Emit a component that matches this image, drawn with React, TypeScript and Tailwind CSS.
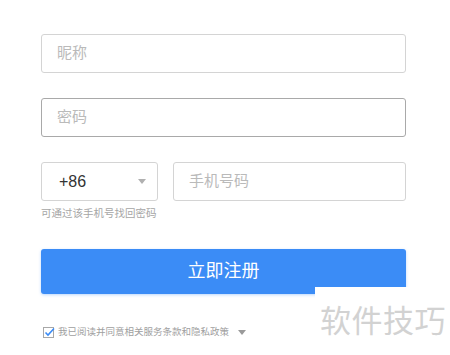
import React from 'react';

const font = { fontFamily: '"Liberation Sans", "Noto Sans CJK SC", sans-serif' };

export default function App() {
  return (
    <div
      className="relative w-[450px] h-[355px] overflow-hidden bg-white"
      style={font}
    >
      <div className="pl-[41px] pt-[34px] w-[406px] flex flex-col">
        {/* Nickname */}
        <div className="h-[39px] border border-[#d4d4d4] rounded-[3px] flex items-center pl-[15px]">
          <span className="text-[15px] text-[#bababa]">昵称</span>
        </div>

        {/* Password */}
        <div className="mt-[25px] h-[39px] border border-[#a9a9a9] rounded-[3px] flex items-center pl-[15px]">
          <span className="text-[15px] text-[#bababa]">密码</span>
        </div>

        {/* Phone row */}
        <div className="mt-[25px] flex gap-[15px]">
          <div className="w-[117px] h-[39px] border border-[#d4d4d4] rounded-[3px] flex items-center justify-between pl-[17px] pr-[11px]">
            <span className="text-[16px] text-[#333]">+86</span>
            <span className="w-0 h-0 border-l-[4px] border-r-[4px] border-t-[5px] border-l-transparent border-r-transparent border-t-[#b0b0b0]" />
          </div>
          <div className="flex-1 h-[39px] border border-[#d4d4d4] rounded-[3px] flex items-center pl-[15px]">
            <span className="text-[15px] text-[#bababa]">手机号码</span>
          </div>
        </div>
        <p className="mt-[5px] text-[10.5px] leading-[14px] text-[#a6a6a6]">可通过该手机号找回密码</p>

        {/* Submit */}
        <button className="mt-[29px] h-[45px] rounded-[3px] bg-[#3b8cf6] text-white text-[18px] shadow-[0_1px_3px_rgba(59,140,246,0.35)]">
          立即注册
        </button>

        {/* Agreement */}
        <div className="mt-[31px] flex items-center gap-[3px] pl-[2px]">
          <svg width="12" height="11" viewBox="0 0 12 11">
            <rect x="0.5" y="0.5" width="10" height="10" fill="white" stroke="#a8a8a8" />
            <path d="M2.5 5.5 L5 8 L11 1.5" fill="none" stroke="#3b8cf6" strokeWidth="1.6" />
          </svg>
          <span className="text-[9.5px] text-[#a0a0a0]">我已阅读并同意相关服务条款和隐私政策</span>
          <span className="ml-[6px] w-0 h-0 border-l-[4px] border-r-[4px] border-t-[5px] border-l-transparent border-r-transparent border-t-[#9a9a9a]" />
        </div>
      </div>

      {/* Watermark */}
      <div className="absolute left-[315px] top-[287px] right-0 bottom-0 bg-white flex items-start pl-[5px] pt-[15px]">
        <span className="text-[31px] leading-[34px] text-[#d2d2d2] tracking-[0.5px]" style={{ fontFamily: '"Noto Sans CJK SC", sans-serif' }}>
          软件技巧
        </span>
      </div>
    </div>
  );
}
